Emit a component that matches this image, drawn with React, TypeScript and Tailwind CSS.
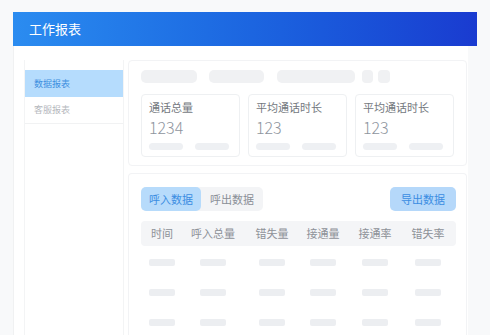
import React from 'react';

const font = { fontFamily: '"Noto Sans CJK SC", "Noto Sans", sans-serif' };

const stats = [
  { title: '通话总量', value: '1234' },
  { title: '平均通话时长', value: '123' },
  { title: '平均通话时长', value: '123' },
];

const columns = ['时间', '呼入总量', '错失量', '接通量', '接通率', '错失率'];

function StatCard({ title, value }: { title: string; value: string }) {
  return (
    <div className="w-[100px] h-[63px] border border-[#eef0f2] rounded-[4px] bg-white px-[7px] pt-[4px]">
      <div className="text-[11px] leading-[16px] h-[16px] text-[#74787e]">{title}</div>
      <div className="text-[16px] leading-[20px] h-[20px] mt-[2px] text-[#8e959e] font-light">{value}</div>
      <div className="flex gap-[12px] mt-[6px]">
        <div className="w-[34px] h-[7px] rounded-full bg-[#eef0f3]"></div>
        <div className="w-[34px] h-[7px] rounded-full bg-[#eef0f3]"></div>
      </div>
    </div>
  );
}

export default function App() {
  return (
    <div className="w-[490px] h-[335px] overflow-hidden bg-[#f8f9fa] pt-[12px]" style={font}>
      <div className="mx-[13px] h-[34px] bg-gradient-to-r from-[#2b8cf0] to-[#1a3bd0] flex items-center pl-[16px] text-white text-[13px]">
        工作报表
      </div>

      <div className="ml-[13px] w-[455px] h-[289px] bg-white border-l border-[#f0f1f2] flex gap-[4px] pl-[10px] pt-[14px]">
        {/* sidebar */}
        <div className="w-[100px] border-x border-[#f3f4f5] pt-[10px]">
          <div className="h-[27px] bg-[#b5dcfd] flex items-center pl-[9px] text-[9px] text-[#3d8fe0]">数据报表</div>
          <div className="h-[27px] flex items-center pl-[9px] text-[9px] text-[#b5b8bd] border-b border-[#f1f2f3]">客服报表</div>
        </div>

        {/* main */}
        <div className="w-[339px] flex flex-col gap-[7px]">
          <div className="border border-[#f2f3f5] rounded-[4px] px-[12px] pt-[9px] pb-[8px]">
            <div className="flex items-center">
              <div className="w-[56px] h-[13px] rounded-[5px] bg-[#f0f1f3]"></div>
              <div className="w-[55px] h-[13px] rounded-[5px] bg-[#f0f1f3] ml-[12px]"></div>
              <div className="w-[78px] h-[13px] rounded-[5px] bg-[#f0f1f3] ml-[13px]"></div>
              <div className="w-[11px] h-[13px] rounded-[4px] bg-[#f0f1f3] ml-[7px]"></div>
              <div className="w-[12px] h-[13px] rounded-[4px] bg-[#f0f1f3] ml-[5px]"></div>
            </div>
            <div className="flex gap-[8px] mt-[11px]">
              {stats.map((s, i) => (
                <StatCard key={i} title={s.title} value={s.value} />
              ))}
            </div>
          </div>

          <div className="flex-1 border border-[#f2f3f5] border-b-0 rounded-t-[4px] px-[12px] pt-[13px]">
            <div className="flex items-center justify-between w-[315px]">
              <div className="flex bg-[#f3f4f6] rounded-[5px] h-[24px] text-[11px]">
                <div className="w-[60px] flex items-center justify-center bg-[#b7dbfb] text-[#3b8de2] rounded-[5px]">呼入数据</div>
                <div className="w-[62px] flex items-center justify-center text-[#8a8f96]">呼出数据</div>
              </div>
              <div className="w-[66px] h-[24px] rounded-[5px] bg-[#b5d8fa] text-[#3b8de2] text-[11px] flex items-center justify-center">导出数据</div>
            </div>

            <div className="w-[315px] mt-[10px]">
              <div className="grid grid-cols-[42px_60px_58px_44px_60px_46px] h-[25px] items-center bg-[#f4f5f7] rounded-[4px] text-[11px] text-[#8d9198]">
                {columns.map(c => (
                  <div key={c} className="text-center">{c}</div>
                ))}
              </div>
              {[1, 2, 3].map(r => (
                <div key={r} className="grid grid-cols-[42px_60px_58px_44px_60px_46px] h-[30px] pt-[13px]">
                  {columns.map(c => (
                    <div key={c} className="flex justify-center">
                      <div className="w-[26px] h-[7px] rounded-[2px] bg-[#eceef1]"></div>
                    </div>
                  ))}
                </div>
              ))}
            </div>
          </div>
        </div>
      </div>
    </div>
  );
}
